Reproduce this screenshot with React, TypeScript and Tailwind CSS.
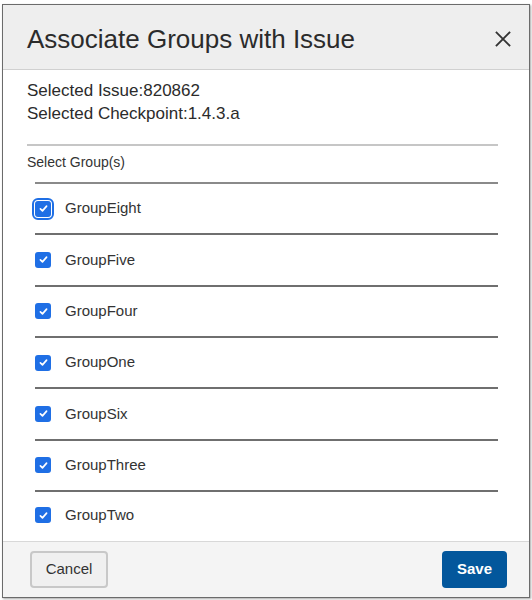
import React, { useState } from "react";

const GROUPS = ["GroupEight", "GroupFive", "GroupFour", "GroupOne", "GroupSix", "GroupThree", "GroupTwo"];

function Check({ checked, focused, onClick }: { checked: boolean; focused?: boolean; onClick: () => void }) {
  return (
    <button
      onClick={onClick}
      className={`flex h-[16px] w-[16px] items-center justify-center rounded-[3px] ${
        checked ? "bg-[#1f6fe5]" : "border border-[#888] bg-white"
      } ${focused ? "outline-2 outline-offset-1 outline-[#1f6fe5]" : ""}`}
    >
      {checked && (
        <svg viewBox="0 0 16 16" className="h-[11px] w-[11px]">
          <path d="M3.5 8.5 L6.5 11.5 L12.5 4.5" fill="none" stroke="white" strokeWidth="2.4" strokeLinecap="round" strokeLinejoin="round" />
        </svg>
      )}
    </button>
  );
}

export default function App() {
  const [checked, setChecked] = useState<Record<string, boolean>>(
    Object.fromEntries(GROUPS.map((g) => [g, true]))
  );

  return (
    <div className="h-[600px] w-[532px] bg-white pt-[4px] pl-[2px]" style={{ fontFamily: '"Liberation Sans", Arial, sans-serif' }}>
      <div className="flex h-[594px] w-[528px] flex-col border border-[#6b6b6b] bg-white shadow-[1px_1px_2px_rgba(0,0,0,0.35)]">
        {/* Header */}
        <div className="flex h-[65px] shrink-0 items-center justify-between border-b border-[#d0d0d0] bg-[#eeeeee] pl-[24px] pr-[18px] pt-[3px]">
          <h2 className="text-[26px] leading-none text-[#2b2b2b]">Associate Groups with Issue</h2>
          <button className="text-[#333]">
            <svg viewBox="0 0 20 20" className="h-[16px] w-[16px]">
              <path d="M2 2 L18 18 M18 2 L2 18" stroke="currentColor" strokeWidth="2.4" strokeLinecap="square" />
            </svg>
          </button>
        </div>

        {/* Body */}
        <div className="flex-1 pl-[24px] pr-[31px] pt-[9px]">
          <div className="text-[17px] leading-[23px] text-[#2b2b2b]">
            <div>Selected Issue:820862</div>
            <div>Selected Checkpoint:1.4.3.a</div>
          </div>
          <div className="mt-[19px] h-[2px] bg-[#c6c6c6]" />
          <div className="mt-[6px] text-[14px] leading-[20px] text-[#333]">Select Group(s)</div>
          <div className="ml-[8px] mt-[10px] border-t-2 border-[#8a8a8a]">
            {GROUPS.map((g, i) => (
              <div
                key={g}
                className={`flex items-center gap-[14px] ${
                  i < GROUPS.length - 1 ? "h-[51.33px] border-b-2 border-[#6f6f6f]" : "h-[47px]"
                }`}
              >
                <Check checked={checked[g]} focused={i === 0} onClick={() => setChecked({ ...checked, [g]: !checked[g] })} />
                <span className="text-[15px] text-[#333]">{g}</span>
              </div>
            ))}
          </div>
        </div>

        {/* Footer */}
        <div className="flex h-[56px] shrink-0 items-start justify-between border-t border-[#d8d8d8] bg-[#f4f4f4] pl-[27px] pr-[22px] pt-[9px]">
          <button className="h-[37px] w-[78px] rounded-[4px] border-2 border-[#c8c8c8] bg-[#f0f0f0] text-[15px] text-[#333]">
            Cancel
          </button>
          <button className="h-[37px] w-[65px] rounded-[4px] bg-[#03579c] text-[15px] font-bold text-white">
            Save
          </button>
        </div>
      </div>
    </div>
  );
}
